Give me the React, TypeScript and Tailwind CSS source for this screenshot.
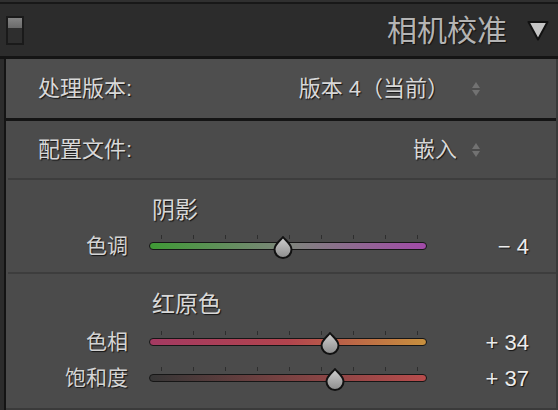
type SliderProps = {
  label: string;
  value: string;
  pos: number;
  track: string;
};

const TICKS = [0, 1, 2, 3, 4, 5, 6, 7, 8];

function Thumb() {
  return (
    <svg width="22" height="24" viewBox="0 0 22 24" className="absolute top-[-11px] -translate-x-1/2">
      <defs>
        <linearGradient id="thumbFill" x1="0" y1="0" x2="0" y2="1">
          <stop offset="0" stopColor="#d0d0d0" />
          <stop offset="1" stopColor="#8c8c8c" />
        </linearGradient>
      </defs>
      <path
        d="M11 2 C13 5 19.5 9 19.5 14.5 A8.5 8.5 0 0 1 2.5 14.5 C2.5 9 9 5 11 2 Z"
        fill="url(#thumbFill)"
        stroke="#111"
        strokeWidth="2"
        strokeLinejoin="round"
      />
    </svg>
  );
}

function Slider({ label, value, pos, track }: SliderProps) {
  return (
    <div className="flex items-center h-[36px]">
      <div className="w-[122px] text-right text-[21px] text-[#d4d4d4] [text-shadow:1px_1px_1px_rgba(0,0,0,0.75)]">{label}</div>
      <div className="relative ml-[21px] w-[278px] h-[8px]">
        {TICKS.map((t) => (
          <div key={t} className="absolute top-[-7px] w-px h-[4px] bg-[#2e2e2e]" style={{ left: 12 + t * 32 }} />
        ))}
        <div className={`h-[8px] rounded-full border-[1.5px] border-[#161616] ${track}`} />
        <div className="absolute top-[4px]" style={{ left: pos * 278 }}>
          <Thumb />
        </div>
      </div>
      <div className="w-[102px] text-right text-[22px] text-[#ececec] [text-shadow:1px_1px_1px_rgba(0,0,0,0.75)]">{value}</div>
    </div>
  );
}

function Stepper() {
  return (
    <div className="flex flex-col items-center gap-[2px] w-[10px]">
      <div className="w-0 h-0 border-l-[4.5px] border-r-[4.5px] border-b-[6px] border-l-transparent border-r-transparent border-b-[#727272]" />
      <div className="w-0 h-0 border-l-[4.5px] border-r-[4.5px] border-t-[6px] border-l-transparent border-r-transparent border-t-[#727272]" />
    </div>
  );
}

function Divider() {
  return <div className="ml-[2px] h-[2px] bg-[#3d3d3d]" />;
}

export default function App() {
  return (
    <div className="w-[558px] h-[410px] overflow-hidden bg-[#2c2c2c] font-['Liberation_Sans','Noto_Sans_CJK_SC',sans-serif]">
      <div className="h-[2px] bg-[#303030]" />
      <div className="h-[2px] bg-[#181818]" />
      {/* header */}
      <div className="flex items-center h-[52px] bg-[#2c2c2c] pl-[6px] pr-[9px]">
        <div className="flex flex-col w-[18px] h-[29px] border-2 border-[#1a1a1a] bg-[#2e2e2e]">
          <div className="h-[10px] bg-gradient-to-b from-[#858585] to-[#6a6a6a]" />
        </div>
        <div className="flex-1" />
        <div className="text-[30px] text-[#b4b4b4] [text-shadow:1px_1px_1px_rgba(0,0,0,0.6)]">相机校准</div>
        <svg width="22" height="21" viewBox="0 0 22 21" className="ml-[20px]">
          <path d="M1.5 2 L20.5 2 L11 19.5 Z" fill="#c4c4c4" stroke="#111" strokeWidth="2" strokeLinejoin="round" />
        </svg>
      </div>
      <div className="h-[3px] bg-[#141414]" />
      {/* body */}
      <div className="flex h-[351px]">
        <div className="w-[4px] bg-[#2c2c2c]" />
        <div className="w-[2px] bg-[#141414]" />
        <div className="flex-1 flex flex-col">
          <div className="flex items-center h-[59px] bg-[#4e4e4e] pl-[32px] pr-[75px] text-[22px] text-[#d8d8d8] [text-shadow:1px_1px_1px_rgba(0,0,0,0.75)]">
            <div>处理版本:</div>
            <div className="flex-1" />
            <div>版本 4（当前）</div>
            <div className="ml-[22px]">
              <Stepper />
            </div>
          </div>
          <div className="h-[3px] bg-[#141414]" />
          <div className="flex-1 flex flex-col bg-[#4b4b4b]">
            <div className="flex items-center h-[57px] pl-[32px] pr-[75px] text-[22px] text-[#d8d8d8] [text-shadow:1px_1px_1px_rgba(0,0,0,0.75)]">
              <div>配置文件:</div>
              <div className="flex-1" />
              <div>嵌入</div>
              <div className="ml-[14px]">
                <Stepper />
              </div>
            </div>
            <Divider />
            {/* shadow group */}
            <div className="flex flex-col pt-[15px] h-[92px]">
              <div className="h-[30px] flex items-center pl-[146px] text-[23px] text-[#d8d8d8] [text-shadow:1px_1px_1px_rgba(0,0,0,0.75)]">阴影</div>
              <div className="mt-[3px]">
                <Slider label="色调" value="− 4" pos={0.482} track="bg-[linear-gradient(to_right,#3f9a35,#7e857c_50%,#a24aa8)]" />
              </div>
            </div>
            <Divider />
            {/* red primary group */}
            <div className="flex flex-col pt-[15px]">
              <div className="h-[30px] flex items-center pl-[146px] text-[23px] text-[#d8d8d8] [text-shadow:1px_1px_1px_rgba(0,0,0,0.75)]">红原色</div>
              <div className="mt-[5px]">
                <Slider label="色相" value="+ 34" pos={0.651} track="bg-[linear-gradient(to_right,#a43a62,#b2444e_50%,#c8903e)]" />
                <Slider label="饱和度" value="+ 37" pos={0.668} track="bg-[linear-gradient(to_right,#363636,#7a4242_50%,#b84c4c)]" />
              </div>
            </div>
            <div className="flex-1" />
            <div className="h-[2px] bg-[#3a3a3a]" />
          </div>
        </div>
        <div className="w-[2px] bg-[#3a3a3a]" />
      </div>
    </div>
  );
}
